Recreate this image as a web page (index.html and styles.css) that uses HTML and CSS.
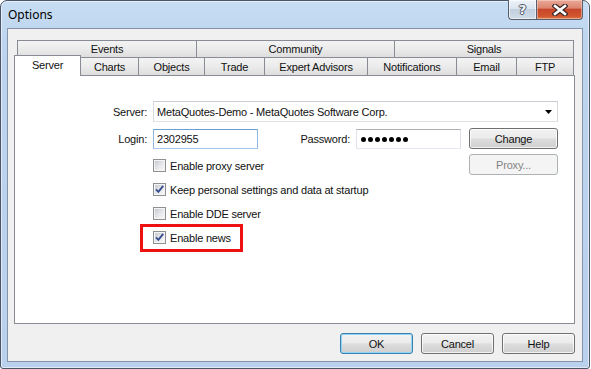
FILE: index.html
```html
<!DOCTYPE html>
<html>
<head>
<meta charset="utf-8">
<title>Options</title>
<link rel="stylesheet" href="styles.css">
</head>
<body>
<div class="window">
  <div class="titlebar">
    <span class="title">Options</span>
    <div class="cbtns">
      <div class="cbtn help">?</div>
      <div class="cbtn close">
        <svg width="16" height="12" viewBox="0 0 16 12"><path d="M3 2 L13 10 M13 2 L3 10" stroke="#3b2a26" stroke-width="5" stroke-linecap="square" fill="none"/><path d="M3 2 L13 10 M13 2 L3 10" stroke="#ffffff" stroke-width="2.6" stroke-linecap="square" fill="none"/></svg>
      </div>
    </div>
  </div>
  <div class="client">
    <div class="tabs">
      <div class="tabrow row1">
        <div class="tab w-events">Events</div>
        <div class="tab w-community">Community</div>
        <div class="tab w-signals">Signals</div>
      </div>
      <div class="tabrow row2">
        <div class="tab sel w-server">Server</div>
        <div class="tab w-charts">Charts</div>
        <div class="tab w-objects">Objects</div>
        <div class="tab w-trade">Trade</div>
        <div class="tab w-ea">Expert Advisors</div>
        <div class="tab w-notif">Notifications</div>
        <div class="tab w-email">Email</div>
        <div class="tab w-ftp">FTP</div>
      </div>
    </div>
    <div class="panel">
      <div class="frow r-server">
        <span class="lbl">Server:</span>
        <div class="field combo">
          <span class="ftext">MetaQuotes-Demo - MetaQuotes Software Corp.</span>
          <svg class="arrow" width="7" height="4" viewBox="0 0 7 4"><path d="M0 0 H7 L3.5 4 Z" fill="#000"/></svg>
        </div>
      </div>
      <div class="frow r-login">
        <span class="lbl">Login:</span>
        <div class="field login"><span class="ftext">2302955</span></div>
        <span class="lbl pwl">Password:</span>
        <div class="field pw"><span class="dots"><i></i><i></i><i></i><i></i><i></i><i></i><i></i></span></div>
        <div class="btn change">Change</div>
      </div>
      <div class="crow first">
        <label class="chk"><span class="cb"></span><span class="ctext">Enable proxy server</span></label>
        <div class="btn disabled proxy">Proxy...</div>
      </div>
      <div class="crow">
        <label class="chk"><span class="cb"><svg width="9" height="9" viewBox="0 0 9 9"><path d="M1 4.3 L3.4 6.9 L8.2 0.9" stroke="#3a4f8f" stroke-width="1.9" fill="none"/></svg></span><span class="ctext">Keep personal settings and data at startup</span></label>
      </div>
      <div class="crow">
        <label class="chk"><span class="cb"></span><span class="ctext">Enable DDE server</span></label>
      </div>
      <div class="crow">
        <label class="chk hl"><span class="cb"><svg width="9" height="9" viewBox="0 0 9 9"><path d="M1 4.3 L3.4 6.9 L8.2 0.9" stroke="#3a4f8f" stroke-width="1.9" fill="none"/></svg></span><span class="ctext">Enable news</span></label>
      </div>
    </div>
    <div class="footer">
      <div class="btn def">OK</div>
      <div class="btn">Cancel</div>
      <div class="btn">Help</div>
    </div>
  </div>
</div>
</body>
</html>
```

FILE: styles.css
```css
* { box-sizing: border-box; }
html, body { margin: 0; padding: 0; }
body {
  width: 591px;
  height: 369px;
  overflow: hidden;
  background: #ffffff;
  font-family: "Liberation Sans", Arial, sans-serif;
  font-size: 11px;
  letter-spacing: -0.2px;
  color: #111;
}

.window {
  width: 590px;
  height: 369px;
  border: 1px solid #4a5566;
  border-radius: 7px 7px 3px 3px;
  background: linear-gradient(180deg, #c7ddf4 0%, #bcd4ee 12%, #b9d1ec 100%);
  box-shadow: inset 0 0 0 1px rgba(255,255,255,0.55);
  padding: 0 6px 6px;
  display: flex;
  flex-direction: column;
}

.titlebar {
  height: 27px;
  margin: 0 -6px;
  padding: 0 6px 0 7px;
  display: flex;
  justify-content: space-between;
  align-items: flex-start;
}
.title {
  font-family: "Noto Sans", "Open Sans", sans-serif;
  font-size: 12px;
  letter-spacing: 0;
  line-height: 16px;
  padding-top: 6px;
  color: #000;
}
.cbtns {
  display: flex;
  margin-top: -1px;
}
.cbtn {
  height: 20px;
  border: 1px solid #57606e;
  border-top: none;
  display: flex;
  align-items: center;
  justify-content: center;
}
.cbtn.help {
  width: 28px;
  border-right: none;
  border-radius: 0 0 0 4px;
  background: linear-gradient(180deg, #eef3f9 0%, #dbe4ef 45%, #c3d0df 50%, #cfdbe8 100%);
  box-shadow: inset 0 0 0 1px rgba(255,255,255,0.6);
  color: #f4f6f9;
  font-family: "DejaVu Sans", sans-serif;
  font-weight: bold;
  font-size: 13px;
  letter-spacing: 0;
  text-shadow: 1px 0 0 #4c5565, -1px 0 0 #4c5565, 0 1px 0 #4c5565, 0 -1px 0 #4c5565;
}
.cbtn.close {
  width: 47px;
  border-radius: 0 0 4px 0;
  background: linear-gradient(180deg, #e9a898 0%, #dc8670 42%, #c8472c 50%, #d2552e 85%, #e07a4c 100%);
  box-shadow: inset 0 0 0 1px rgba(255,230,220,0.45);
}

.client {
  flex: 1;
  border: 1px solid #8494aa;
  background: #f0f0f0;
  display: flex;
  flex-direction: column;
}

.tabs { margin: 11px 0 0 6px; }
.tabrow { display: flex; }
.row1 { margin-left: 3px; height: 17px; }
.row2 { height: 18px; align-items: flex-end; }
.tab {
  border: 1px solid #898c95;
  border-bottom: none;
  background: linear-gradient(180deg, #f3f3f3 0%, #ebebeb 50%, #dedede 100%);
  display: flex;
  align-items: center;
  justify-content: center;
  white-space: nowrap;
}
.tab + .tab { margin-left: -1px; }
.row1 .tab { height: 17px; }
.row2 .tab { height: 18px; }
.row2 .tab.sel {
  height: 21px;
  margin-bottom: -1px;
  background: #ffffff;
  position: relative;
  z-index: 2;
  padding-bottom: 2px;
}
.w-events { width: 180px; }
.w-community { width: 199px; }
.w-signals { width: 180px; }
.w-server { width: 67px; }
.w-charts { width: 59px; }
.w-objects { width: 67px; }
.w-trade { width: 61px; }
.w-ea { width: 104px; }
.w-notif { width: 90px; }
.w-email { width: 61px; }
.w-ftp { width: 58px; }

.panel {
  margin-left: 6px;
  width: 561px;
  height: 249px;
  border: 1px solid #898c95;
  background: #ffffff;
  padding-top: 25px;
}

.frow { display: flex; }
.lbl {
  width: 132px;
  margin-right: 6px;
  text-align: right;
  white-space: nowrap;
}
.r-server { height: 21px; align-items: center; }
.r-login { height: 21px; margin-top: 6px; align-items: flex-end; }
.r-login .lbl { line-height: 20px; }
.lbl.pwl { width: 92px; margin-right: 6px; }

.field {
  height: 20px;
  background: #fff;
  border: 1px solid;
  border-color: #abadb3 #dbdfe6 #e3e9ef #e2e3ea;
  display: flex;
  align-items: center;
  padding-left: 3px;
  white-space: nowrap;
}
.combo {
  width: 405px;
  height: 21px;
  justify-content: space-between;
  padding-right: 5px;
  border-color: #c9ccd2 #d6d9de #dfe2e6 #d6d9de;
}
.login { width: 105px; border-color: #6e9fd3 #8fb8e3 #a7c8ec #8fb8e3; }
.pw { width: 105px; padding-left: 4px; }
.dots { display: flex; gap: 2px; }
.dots i { width: 5px; height: 5px; border-radius: 50%; background: #000; display: block; }

.btn {
  height: 21px;
  border: 1px solid #707070;
  border-radius: 3px;
  background: linear-gradient(180deg, #f2f2f2 0%, #ebebeb 48%, #dddddd 52%, #cfcfcf 100%);
  box-shadow: inset 0 0 0 1px rgba(255,255,255,0.75);
  display: flex;
  align-items: center;
  justify-content: center;
  white-space: nowrap;
}
.btn.change { width: 89px; margin-left: 8px; }
.btn.proxy { width: 89px; margin-top: 1px; margin-right: 16px; }
.btn.disabled {
  border-color: #adb2b5;
  background: #f4f4f4;
  box-shadow: none;
  color: #838383;
}
.btn.def {
  border-color: #3c7fb1;
  box-shadow: inset 0 0 0 1px #8fd6f6;
}

.crow {
  height: 24px;
  display: flex;
  align-items: flex-start;
  padding-left: 138px;
}
.crow.first { margin-top: 4px; }
.chk {
  flex: 1;
  display: flex;
  align-items: center;
  height: 13px;
  margin-top: 6px;
  white-space: nowrap;
}
.chk.hl {
  flex: 0 0 auto;
  height: 22px;
  padding: 4px 9px 5px 10px;
  margin: 2px 0 0 -10px;
  outline: 3px solid #ee1111;
}
.cb {
  width: 13px;
  height: 13px;
  flex: 0 0 13px;
  border: 1px solid #8e8f8f;
  padding: 1px;
  background: linear-gradient(135deg, #c6cad0 0%, #e6e8eb 55%, #f8f8f8 100%) content-box, #f4f4f4;
  display: flex;
}
.ctext { margin-left: 4px; }

.footer {
  display: flex;
  justify-content: flex-end;
  gap: 8px;
  margin: 9px 0 0 6px;
  width: 561px;
}
.footer .btn { width: 73px; }
```
